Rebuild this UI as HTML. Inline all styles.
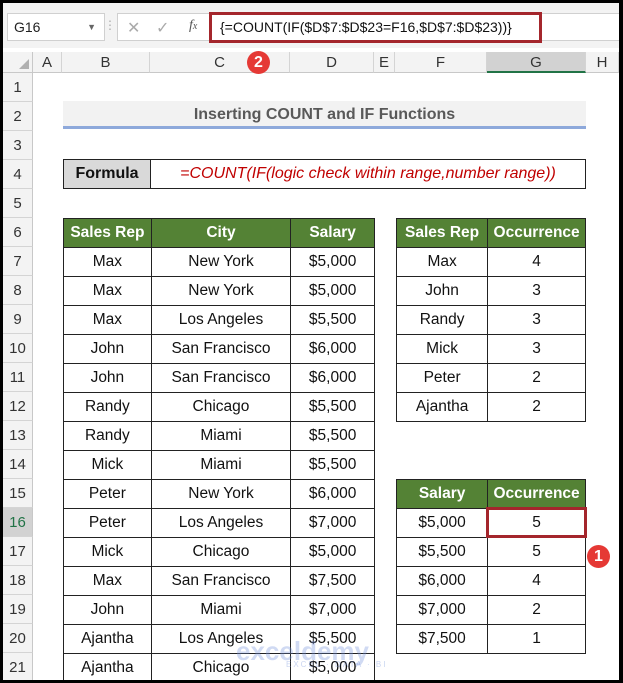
<!DOCTYPE html>
<html><head><style>
*{margin:0;padding:0;box-sizing:border-box}
body{width:623px;height:683px;overflow:hidden;background:#fff;font-family:"Liberation Sans",Arial,sans-serif;position:relative}
.a{position:absolute}
.frame{position:absolute;left:0;top:0;width:623px;height:683px;border:3px solid #000;border-right-width:4px;pointer-events:none;z-index:10}
.colh{position:absolute;top:52px;height:21px;background:#f3f3f3;border-right:1px solid #d4d4d4;border-bottom:1px solid #c8c8c8;font-size:15px;color:#333;text-align:center;line-height:21px}
.rowh{position:absolute;left:3px;width:30px;height:29px;background:#f3f3f3;border-bottom:1px solid #d4d4d4;border-right:1px solid #c8c8c8;font-size:15px;color:#333;text-align:center;line-height:29px}
table{position:absolute;border-collapse:collapse;font-size:15.5px}
td{border:1px solid #222;height:29px;text-align:center;padding:0;color:#111}
th{border:1px solid #222;height:29px;background:#548235;color:#fff;font-size:15.5px;font-weight:bold;text-align:center}
</style></head><body>
<div class="a" style="left:0;top:0;width:623px;height:48px;background:#f3f3f3"></div>
<div class="a" style="left:7px;top:13px;width:98px;height:28px;background:#fff;border:1px solid #d0d0d0;font-size:14px;line-height:26px;padding-left:6px;color:#222">G16<span style="position:absolute;right:8px;top:0;font-size:9px;color:#666">▼</span></div>
<div class="a" style="left:104px;top:18px;color:#aaa;font-size:12px">⋮</div>
<div class="a" style="left:117px;top:13px;width:503px;height:28px;background:#fff;border:1px solid #d0d0d0"></div>
<div class="a" style="left:127px;top:18px;color:#aaa;font-size:16px">✕</div>
<div class="a" style="left:156px;top:18px;color:#aaa;font-size:16px">✓</div>
<div class="a" style="left:189px;top:18px;color:#555;font-size:14px;font-style:italic;font-family:'Liberation Serif',serif">f<span style="font-size:10px">x</span></div>
<div class="a" style="left:209px;top:12px;width:333px;height:31px;border:3px solid #a4262c;background:#fff;font-size:14px;line-height:25px;padding-left:8px;color:#111">{=COUNT(IF($D$7:$D$23=F16,$D$7:$D$23))}</div>

<div class="a" style="left:3px;top:52px;width:30px;height:21px;background:#f3f3f3;border-right:1px solid #c8c8c8;border-bottom:1px solid #c8c8c8"><div style="position:absolute;right:3px;bottom:3px;width:0;height:0;border-left:10px solid transparent;border-bottom:10px solid #b0b0b0"></div></div>
<div class="colh" style="left:33px;width:29px">A</div>
<div class="colh" style="left:62px;width:88px">B</div>
<div class="colh" style="left:150px;width:140px">C</div>
<div class="colh" style="left:290px;width:84px">D</div>
<div class="colh" style="left:374px;width:21px">E</div>
<div class="colh" style="left:395px;width:92px">F</div>
<div class="colh" style="left:487px;width:99px;background:#d2d2d2;border-bottom:2px solid #217346">G</div>
<div class="colh" style="left:586px;width:33px">H</div>

<div class="rowh" style="top:73px">1</div><div class="rowh" style="top:102px">2</div><div class="rowh" style="top:131px">3</div><div class="rowh" style="top:160px">4</div><div class="rowh" style="top:189px">5</div><div class="rowh" style="top:218px">6</div><div class="rowh" style="top:247px">7</div><div class="rowh" style="top:276px">8</div><div class="rowh" style="top:305px">9</div><div class="rowh" style="top:334px">10</div><div class="rowh" style="top:363px">11</div><div class="rowh" style="top:392px">12</div><div class="rowh" style="top:421px">13</div><div class="rowh" style="top:450px">14</div><div class="rowh" style="top:479px">15</div><div class="rowh" style="top:508px;background:#d2d2d2;color:#217346">16</div><div class="rowh" style="top:537px">17</div><div class="rowh" style="top:566px">18</div><div class="rowh" style="top:595px">19</div><div class="rowh" style="top:624px">20</div><div class="rowh" style="top:653px">21</div>

<div class="a" style="left:63px;top:101px;width:523px;height:28px;background:#f2f2f2;border-bottom:3px solid #8ea9db;text-align:center;font-weight:bold;font-size:16px;line-height:28px;color:#595959">Inserting COUNT and IF Functions</div>

<div class="a" style="left:63px;top:159px;width:88px;height:30px;background:#d9d9d9;border:1px solid #222;font-weight:bold;font-size:16px;text-align:center;line-height:28px;color:#111">Formula</div>
<div class="a" style="left:150px;top:159px;width:436px;height:30px;border:1px solid #222;font-style:italic;font-size:16px;text-align:center;line-height:28px;color:#c00000">=COUNT(IF(logic check within range,number range))</div>

<table style="left:63px;top:218px;width:312px">
<colgroup><col style="width:88px"><col style="width:140px"><col style="width:84px"></colgroup>
<tr><th>Sales Rep</th><th>City</th><th>Salary</th></tr>
<tr><td>Max</td><td>New York</td><td>$5,000</td></tr>
<tr><td>Max</td><td>New York</td><td>$5,000</td></tr>
<tr><td>Max</td><td>Los Angeles</td><td>$5,500</td></tr>
<tr><td>John</td><td>San Francisco</td><td>$6,000</td></tr>
<tr><td>John</td><td>San Francisco</td><td>$6,000</td></tr>
<tr><td>Randy</td><td>Chicago</td><td>$5,500</td></tr>
<tr><td>Randy</td><td>Miami</td><td>$5,500</td></tr>
<tr><td>Mick</td><td>Miami</td><td>$5,500</td></tr>
<tr><td>Peter</td><td>New York</td><td>$6,000</td></tr>
<tr><td>Peter</td><td>Los Angeles</td><td>$7,000</td></tr>
<tr><td>Mick</td><td>Chicago</td><td>$5,000</td></tr>
<tr><td>Max</td><td>San Francisco</td><td>$7,500</td></tr>
<tr><td>John</td><td>Miami</td><td>$7,000</td></tr>
<tr><td>Ajantha</td><td>Los Angeles</td><td>$5,500</td></tr>
<tr><td>Ajantha</td><td>Chicago</td><td>$5,000</td></tr>
</table>

<table style="left:396px;top:218px;width:190px">
<colgroup><col style="width:92px"><col style="width:98px"></colgroup>
<tr><th>Sales Rep</th><th>Occurrence</th></tr>
<tr><td>Max</td><td>4</td></tr>
<tr><td>John</td><td>3</td></tr>
<tr><td>Randy</td><td>3</td></tr>
<tr><td>Mick</td><td>3</td></tr>
<tr><td>Peter</td><td>2</td></tr>
<tr><td>Ajantha</td><td>2</td></tr>
</table>

<table style="left:396px;top:479px;width:190px">
<colgroup><col style="width:92px"><col style="width:98px"></colgroup>
<tr><th>Salary</th><th>Occurrence</th></tr>
<tr><td>$5,000</td><td>5</td></tr>
<tr><td>$5,500</td><td>5</td></tr>
<tr><td>$6,000</td><td>4</td></tr>
<tr><td>$7,000</td><td>2</td></tr>
<tr><td>$7,500</td><td>1</td></tr>
</table>
<div class="a" style="left:486px;top:507px;width:101px;height:31px;border:3px solid #a4262c"></div>

<div class="a" style="left:236px;top:636px;font-size:26px;font-weight:bold;color:rgba(120,150,220,0.35)">exceldemy</div>
<div class="a" style="left:286px;top:660px;font-size:8px;color:rgba(120,150,220,0.4);letter-spacing:2px">EXCEL · DATA · BI</div>

<div class="a" style="left:247px;top:51px;width:23px;height:23px;border-radius:50%;background:#e53935;color:#fff;font-weight:bold;font-size:16px;text-align:center;line-height:23px">2</div>
<div class="a" style="left:587px;top:545px;width:23px;height:23px;border-radius:50%;background:#e53935;color:#fff;font-weight:bold;font-size:16px;text-align:center;line-height:23px">1</div>
<div class="frame"></div>
</body></html>
